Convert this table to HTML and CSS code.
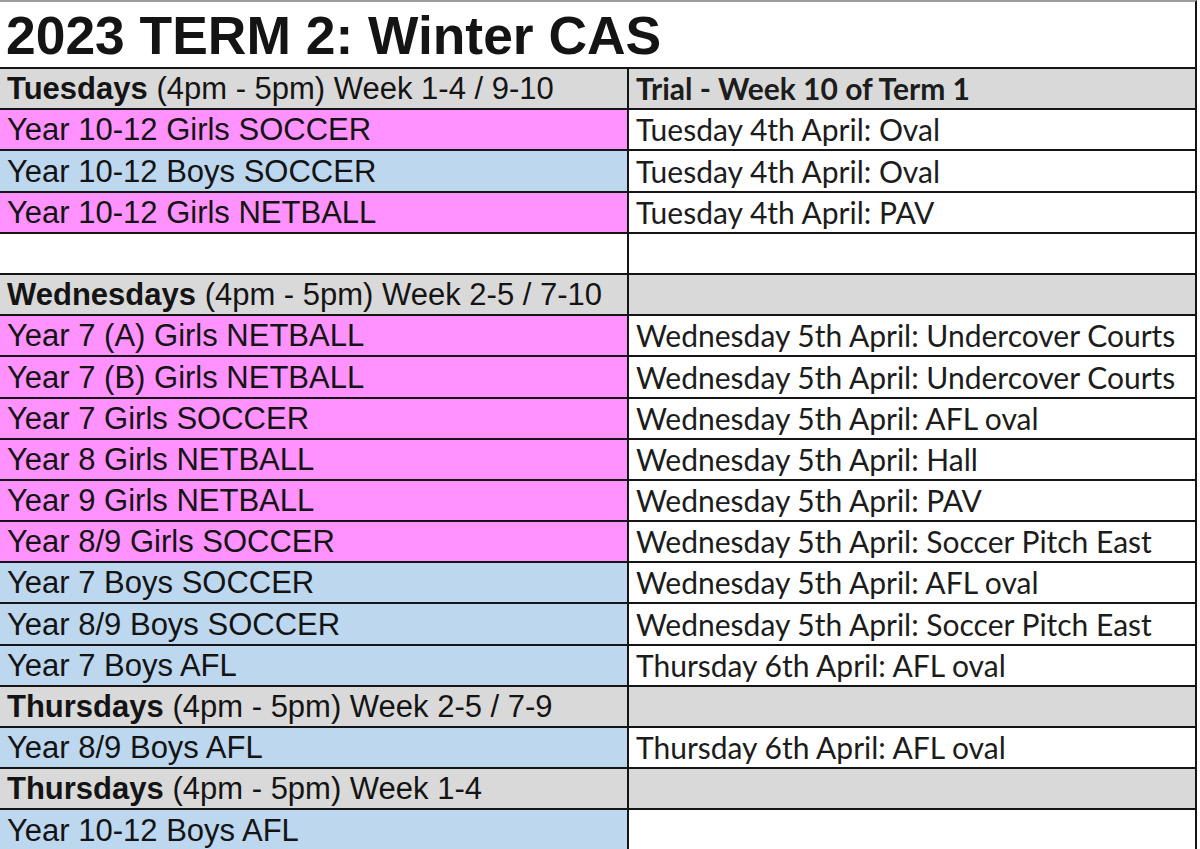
FILE: index.html
```html
<!DOCTYPE html>
<html lang="en">
<head>
<meta charset="utf-8">
<title>2023 TERM 2: Winter CAS</title>
<link rel="stylesheet" href="styles.css">
</head>
<body>
<div class="sheet">
  <div class="title">2023 TERM 2: Winter CAS</div>

  <div class="row head">
    <div class="cell a"><b>Tuesdays</b> (4pm - 5pm) Week 1-4 / 9-10</div>
    <div class="cell b"><b>Trial - Week 10 of Term 1</b></div>
  </div>
  <div class="row pink">
    <div class="cell a">Year 10-12 Girls SOCCER</div>
    <div class="cell b">Tuesday 4th April: Oval</div>
  </div>
  <div class="row blue">
    <div class="cell a">Year 10-12 Boys SOCCER</div>
    <div class="cell b">Tuesday 4th April: Oval</div>
  </div>
  <div class="row pink">
    <div class="cell a">Year 10-12 Girls NETBALL</div>
    <div class="cell b">Tuesday 4th April: PAV</div>
  </div>
  <div class="row blank">
    <div class="cell a"></div>
    <div class="cell b"></div>
  </div>

  <div class="row head">
    <div class="cell a"><b>Wednesdays</b> (4pm - 5pm) Week 2-5 / 7-10</div>
    <div class="cell b"></div>
  </div>
  <div class="row pink">
    <div class="cell a">Year 7 (A) Girls NETBALL</div>
    <div class="cell b">Wednesday 5th April: Undercover Courts</div>
  </div>
  <div class="row pink">
    <div class="cell a">Year 7 (B) Girls NETBALL</div>
    <div class="cell b">Wednesday 5th April: Undercover Courts</div>
  </div>
  <div class="row pink">
    <div class="cell a">Year 7 Girls SOCCER</div>
    <div class="cell b">Wednesday 5th April: AFL oval</div>
  </div>
  <div class="row pink">
    <div class="cell a">Year 8 Girls NETBALL</div>
    <div class="cell b">Wednesday 5th April: Hall</div>
  </div>
  <div class="row pink">
    <div class="cell a">Year 9 Girls NETBALL</div>
    <div class="cell b">Wednesday 5th April: PAV</div>
  </div>
  <div class="row pink">
    <div class="cell a">Year 8/9 Girls SOCCER</div>
    <div class="cell b">Wednesday 5th April: Soccer Pitch East</div>
  </div>
  <div class="row blue">
    <div class="cell a">Year 7 Boys SOCCER</div>
    <div class="cell b">Wednesday 5th April: AFL oval</div>
  </div>
  <div class="row blue">
    <div class="cell a">Year 8/9 Boys SOCCER</div>
    <div class="cell b">Wednesday 5th April: Soccer Pitch East</div>
  </div>
  <div class="row blue">
    <div class="cell a">Year 7 Boys AFL</div>
    <div class="cell b">Thursday 6th April: AFL oval</div>
  </div>

  <div class="row head">
    <div class="cell a"><b>Thursdays</b> (4pm - 5pm) Week 2-5 / 7-9</div>
    <div class="cell b"></div>
  </div>
  <div class="row blue">
    <div class="cell a">Year 8/9 Boys AFL</div>
    <div class="cell b">Thursday 6th April: AFL oval</div>
  </div>

  <div class="row head">
    <div class="cell a"><b>Thursdays</b> (4pm - 5pm) Week 1-4</div>
    <div class="cell b"></div>
  </div>
  <div class="row blue">
    <div class="cell a">Year 10-12 Boys AFL</div>
    <div class="cell b"></div>
  </div>
</div>
</body>
</html>
```

FILE: styles.css
```css
html, body {
  margin: 0;
  padding: 0;
  background: #ffffff;
  overflow: hidden;
  height: 849px;
}

.sheet {
  width: 1197px;
  box-sizing: border-box;
  border-top: 2px solid #9c9c9c;
  border-right: 2px solid #151515;
  color: #141414;
}

.title {
  box-sizing: border-box;
  height: 67px;
  padding: 0 0 0 6px;
  border-bottom: 2px solid #151515;
  font-family: "Liberation Sans", Arial, sans-serif;
  font-weight: bold;
  font-size: 53.4px;
  line-height: 68px;
  white-space: nowrap;
}

.row {
  display: grid;
  grid-template-columns: 629px 1fr;
  box-sizing: border-box;
  height: 41.2px;
  border-bottom: 2px solid #151515;
}

.cell {
  display: flex;
  align-items: flex-end;
  white-space: nowrap;
  overflow: hidden;
  padding-bottom: 4px;
}

.cell.a {
  padding-left: 7px;
  border-right: 2px solid #151515;
  font-family: "Liberation Sans", Arial, sans-serif;
  font-size: 31px;
  line-height: 31px;
}

.cell.b {
  padding-left: 7px;
  background: #ffffff;
  font-family: Lato, "Open Sans", sans-serif;
  font-size: 30px;
  line-height: 31px;
  color: #1c1c1c;
}

.cell b {
  font-weight: bold;
  margin-right: 0.28em;
}

.cell.b b {
  margin-right: 0;
}

.pink .a { background: #ff92ff; }
.blue .a { background: #bdd7ee; }
.blank .a { background: #ffffff; }
.head .a, .head .b { background: #d9d9d9; }
```
